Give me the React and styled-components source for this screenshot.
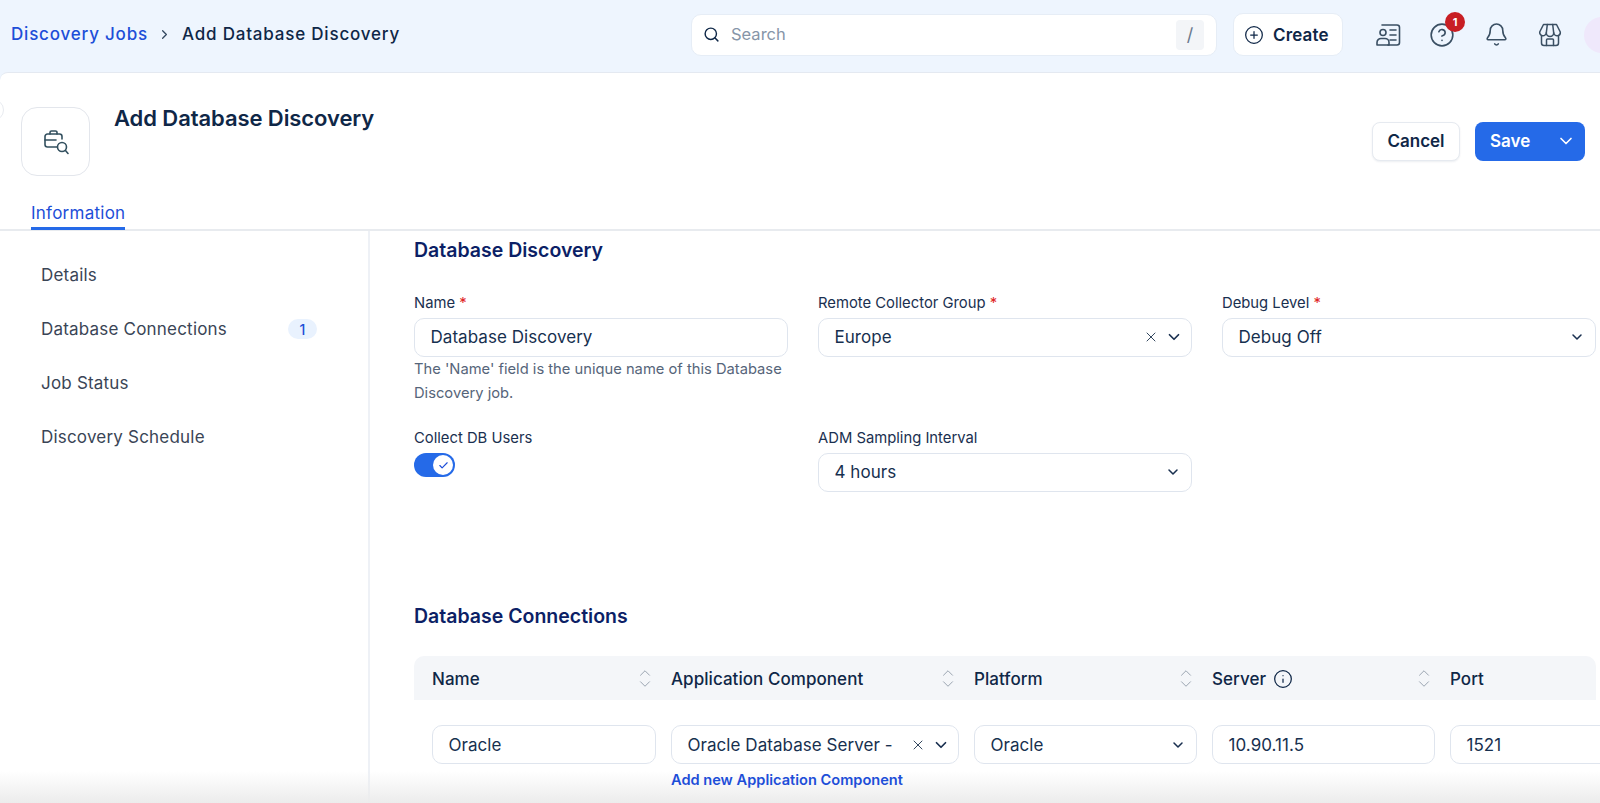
import React from "react";
import styled, { createGlobalStyle } from "styled-components";
import { Search, CirclePlus, CircleHelp, Bell, ChevronRight, ChevronDown, ChevronUp, X, Info, Check } from "lucide-react";

const Global = createGlobalStyle`
  html, body { margin: 0; padding: 0; background: #eef5fe; }
  body { font-family: Inter, "Liberation Sans", sans-serif; color: #0f2747; }
  * { box-sizing: border-box; }
`;

const Page = styled.div`
  position: relative;
  width: 1600px;
  height: 803px;
  overflow: hidden;
  background: #eef5fe;
`;

const TopBar = styled.header`
  display: flex;
  align-items: center;
  height: 72px;
  padding-left: 11px;
`;

const Crumbs = styled.nav`
  flex: none;
  display: flex;
  align-items: center;
  width: 680px;
  margin-top: -4px;
  font-size: 17px;
  font-weight: 500;
  letter-spacing: 0.8px;
`;
const CrumbLink = styled.span`color: #1d4ed8;`;
const CrumbSep = styled.span`
  display: flex;
  margin: 0 10px 0 9px;
  color: #33475f;
`;
const CrumbCurrent = styled.span`color: #0f2747;`;

const SearchBox = styled.div`
  flex: none;
  display: flex;
  align-items: center;
  gap: 11px;
  width: 526px;
  height: 42px;
  margin-top: -3px;
  padding: 0 12px 0 11px;
  background: #fff;
  border: 1px solid #e6edf6;
  border-radius: 10px;
  color: #0f2747;
`;
const SearchHint = styled.span`
  flex: 1;
  font-size: 16.5px;
  padding-bottom: 1px;
  color: #8695a8;
`;
const SlashKey = styled.span`
  display: flex;
  align-items: center;
  justify-content: center;
  width: 28px;
  height: 30px;
  background: #f3f5f8;
  border-radius: 4px;
  font-size: 18px;
  color: #6b7a8d;
`;

const CreateButton = styled.button`
  flex: none;
  display: flex;
  align-items: center;
  gap: 9px;
  width: 110px;
  height: 43px;
  margin: -3px 0 0 16px;
  padding: 0 0 0 10px;
  background: #fff;
  border: 1px solid #e6edf6;
  border-radius: 10px;
  font: 600 17px Inter, sans-serif;
  letter-spacing: 0.15px;
  color: #0f2747;
`;

const IconRow = styled.div`
  display: flex;
  align-items: center;
  flex: none;
  margin-left: 31px;
  gap: 26px;
  margin-top: -3px;
  color: #3a4f63;
`;
const IconSlot = styled.span`
  position: relative;
  display: flex;
  width: 28px;
  height: 28px;
  align-items: center;
  justify-content: center;
`;
const Dot = styled.span`
  position: absolute;
  top: -9px;
  right: -9px;
  display: flex;
  align-items: center;
  justify-content: center;
  width: 20px;
  height: 20px;
  border-radius: 50%;
  background: #c81e24;
  color: #fff;
  font-size: 11px;
  font-weight: 700;
`;
const Avatar = styled.span`
  flex: none;
  width: 36px;
  height: 36px;
  border-radius: 50%;
  background: #efe8fb;
  margin-left: 20px;
  margin-top: -2px;
`;

const Panel = styled.section`
  height: 731px;
  background: #fff;
  border-top: 1px solid #e4e9f1;
  border-top-left-radius: 8px;
`;

const PageHead = styled.div`
  display: flex;
  align-items: flex-start;
  height: 158px;
  padding: 34px 15px 0 21px;
  border-bottom: 2px solid #e8ebef;
  position: relative;
`;
const Collapse = styled.span`
  position: absolute;
  left: -18px;
  top: 26px;
  width: 22px;
  height: 22px;
  border-radius: 50%;
  background: #fff;
  border: 1px solid #e8ebf0;
`;
const IconTile = styled.div`
  display: flex;
  align-items: center;
  justify-content: center;
  width: 69px;
  height: 69px;
  border: 1px solid #e3e6ec;
  border-radius: 16px;
  color: #33505f;
`;
const Title = styled.h1`
  flex: 1;
  margin: -3px 0 0 24px;
  font-size: 22px;
  line-height: 28px;
  font-weight: 600;
  letter-spacing: -0.08px;
  color: #0f2747;
`;
const Actions = styled.div`
  display: flex;
  gap: 15px;
  margin-top: 15px;
`;
const CancelButton = styled.button`
  width: 88px;
  height: 39px;
  padding: 0 0 2px;
  background: #fff;
  border: 1px solid #e6eaf0;
  border-radius: 8px;
  box-shadow: 0 1px 2px rgba(16, 40, 80, 0.08);
  font: 600 17px Inter, sans-serif;
  color: #0f2747;
`;
const SaveButton = styled.button`
  display: flex;
  align-items: center;
  justify-content: space-between;
  width: 110px;
  height: 39px;
  padding: 0 9px 2px 15px;
  background: #256ae8;
  border: 0;
  border-radius: 8px;
  font: 600 17px Inter, sans-serif;
  color: #fff;
`;
const TabStrip = styled.div`
  position: absolute;
  left: 31px;
  bottom: -1px;
  height: 36px;
  font-size: 17px;
  font-weight: 400;
  letter-spacing: 0.25px;
  line-height: 26px;
  color: #1d4ed8;
  border-bottom: 3px solid #256ae8;
  padding-top: 6px;
`;

const Body = styled.div`
  display: flex;
  height: 571px;
`;
const Side = styled.aside`
  flex: none;
  width: 370px;
  padding: 17px 51px 0 41px;
  border-right: 2px solid #eef1f6;
  display: flex;
  flex-direction: column;
`;
const SideItem = styled.div`
  display: flex;
  align-items: center;
  justify-content: space-between;
  height: 54px;
  font-size: 17px;
  letter-spacing: 0.2px;
  color: #3a4556;
`;
const Count = styled.span`
  display: flex;
  align-items: center;
  justify-content: center;
  width: 29px;
  height: 20px;
  border-radius: 10px;
  background: #e9f2fe;
  color: #1d4ed8;
  font-size: 14px;
  font-weight: 500;
`;

const Main = styled.main`
  flex: 1;
  min-width: 0;
  overflow: hidden;
  padding: 7px 4px 0 44px;
`;
const SectionTitle = styled.h2`
  margin: 0;
  font-size: 19.5px;
  line-height: 24px;
  font-weight: 600;
  color: #0c1f66;
`;
const FormGrid = styled.div`
  display: grid;
  grid-template-columns: repeat(3, 374px);
  column-gap: 30px;
  margin-top: 31px;
`;
const Field = styled.div`
  height: ${p => p.$h}px;
`;
const Label = styled.label`
  display: block;
  font-size: 14.8px;
  line-height: 20px;
  margin-bottom: 5px;
  color: #1a3050;
`;
const Req = styled.span`color: #e02424;`;
const Control = styled.div`
  display: flex;
  align-items: center;
  height: 39px;
  padding: 0 ${p => p.$pr ?? 15}px 1px 15.5px;
  border: 1px solid #dfe5ee;
  border-radius: 10px;
  background: #fff;
  font-size: 17px;
  letter-spacing: 0.05px;
  color: #17304f;
  min-width: 0;
`;
const ControlText = styled.span`
  flex: 1;
  min-width: 0;
  white-space: nowrap;
  overflow: hidden;
`;
const ClearIcon = styled(X)`
  flex: none;
  margin-right: 6px;
  color: #33475f;
`;
const Caret = styled(ChevronDown)`
  flex: none;
  color: #1a3050;
`;
const Hint = styled.p`
  margin: 0;
  font-size: 14.72px;
  line-height: 24px;
  color: #56657a;
`;
const Toggle = styled.span`
  display: flex;
  align-items: center;
  justify-content: flex-end;
  width: 41px;
  height: 24px;
  padding-right: 2px;
  border-radius: 12px;
  background: #256ae8;
`;
const Knob = styled.span`
  display: flex;
  align-items: center;
  justify-content: center;
  width: 20px;
  height: 20px;
  border-radius: 50%;
  background: #fff;
  color: #1d4ed8;
`;

const ConnectionsTitle = styled(SectionTitle)`
  margin-top: 97px;
`;
const Table = styled.div`
  width: 1260px;
  margin-top: 28px;
`;
const columns = "224px 288px 223px 223px 223px";
const HeadRow = styled.div`
  display: grid;
  grid-template-columns: ${columns};
  column-gap: 15px;
  align-items: center;
  width: 1182px;
  height: 44px;
  padding-left: 18px;
  background: #f4f6f9;
  border-radius: 10px 10px 0 0;
  overflow: hidden;
`;
const HeadCell = styled.div`
  display: flex;
  align-items: center;
  justify-content: space-between;
  padding-right: 2px;
  font-size: 17px;
  font-weight: 500;
  letter-spacing: 0.05px;
  color: #0f2747;
`;
const HeadLabel = styled.span`
  display: flex;
  align-items: center;
  gap: 7px;
  padding-top: 1px;
`;
const SortStack = styled.span`
  display: flex;
  flex-direction: column;
  color: #98a2af;
`;
const SortDown = styled(ChevronDown)`
  margin-top: -7px;
`;
const BodyRow = styled.div`
  display: grid;
  grid-template-columns: ${columns};
  column-gap: 15px;
  width: 1200px;
  padding: 25px 0 0 18px;
  ${Control} { padding-bottom: 0; }
`;
const AddLink = styled.a`
  position: relative;
  z-index: 1;
  display: block;
  margin-top: 8px;
  font-size: 14.6px;
  line-height: 17px;
  font-weight: 600;
  color: #1d4ed8;
`;
const Fade = styled.div`
  position: absolute;
  left: 0;
  right: 0;
  bottom: 0;
  height: 32px;
  background: linear-gradient(to bottom, rgba(236, 236, 236, 0), #ececec);
  pointer-events: none;
`;

const ContactIcon = () => (
  <svg width="26" height="24" viewBox="0 0 26 24" fill="none" stroke="currentColor" strokeWidth="1.6" strokeLinecap="round" strokeLinejoin="round">
    <path d="M7 2h15a2.500 2.500 0 0 1 2.500 2.500v15a2.500 2.500 0 0 1-2.500 2.500H13" />
    <path d="M15 7h6M15 12h6M15 17h6" />
    <circle cx="8" cy="9.500" r="3" />
    <path d="M2 22v-2.500a4 4 0 0 1 4-4h4a4 4 0 0 1 4 4V22z" />
  </svg>
);

const ShopIcon = () => (
  <svg width="24" height="24" viewBox="0 0 24 24" fill="none" stroke="currentColor" strokeWidth="1.5" strokeLinecap="round" strokeLinejoin="round">
    <path d="M5.500 1.500h13l3.800 7.500a3.200 3.200 0 0 1-6.600.8 3.700 3.700 0 0 1-7.400 0 3.200 3.200 0 0 1-6.600-.8z" />
    <path d="M9.300 1.500 8.300 9.800M14.700 1.500l1 8.300" />
    <path d="M3.500 12.500V20a2.500 2.500 0 0 0 2.500 2.500h12a2.500 2.500 0 0 0 2.500-2.500v-7.500" />
    <path d="M8.500 22.500V17a1 1 0 0 1 1-1h5a1 1 0 0 1 1 1v5.500" />
  </svg>
);

const CaseSearchIcon = () => (
  <svg width="26" height="26" viewBox="0 0 26 26" fill="none" stroke="currentColor" strokeWidth="1.6" strokeLinecap="round" strokeLinejoin="round">
    <path d="M14 18H4.500A2.500 2.500 0 0 1 2 15.500v-8A2.500 2.500 0 0 1 4.500 5h12A2.500 2.500 0 0 1 19 7.500V10" />
    <path d="M7 5V3.500A1.500 1.500 0 0 1 8.500 2h4A1.500 1.500 0 0 1 14 3.500V5" />
    <path d="M2 11h11" />
    <circle cx="19" cy="18" r="4.500" />
    <path d="M22.500 21.500 25 24.500" />
  </svg>
);

const Sort = () => (
  <SortStack>
    <ChevronUp size={18} strokeWidth={1.3} />
    <SortDown size={18} strokeWidth={1.3} />
  </SortStack>
);

const SelectControl = ({ children, clear }) => (
  <Control $pr={clear ? 8 : 10}>
    <ControlText>{children}</ControlText>
    {clear && <ClearIcon size={16} strokeWidth={1.5} />}
    <Caret size={clear ? 18 : 16} strokeWidth={2.3} />
  </Control>
);

export default function App() {
  return (
    <Page>
      <Global />
      <TopBar>
        <Crumbs>
          <CrumbLink>Discovery Jobs</CrumbLink>
          <CrumbSep><ChevronRight size={15} /></CrumbSep>
          <CrumbCurrent>Add Database Discovery</CrumbCurrent>
        </Crumbs>
        <SearchBox>
          <Search size={17} strokeWidth={2} />
          <SearchHint>Search</SearchHint>
          <SlashKey>/</SlashKey>
        </SearchBox>
        <CreateButton><CirclePlus size={20} strokeWidth={1.5} />Create</CreateButton>
        <IconRow>
          <IconSlot><ContactIcon /></IconSlot>
          <IconSlot><CircleHelp size={26} strokeWidth={1.5} /><Dot>1</Dot></IconSlot>
          <IconSlot><Bell size={25} strokeWidth={1.5} /></IconSlot>
          <IconSlot><ShopIcon /></IconSlot>
        </IconRow>
        <Avatar />
      </TopBar>
      <Panel>
        <PageHead>
          <Collapse />
          <IconTile><CaseSearchIcon /></IconTile>
          <Title>Add Database Discovery</Title>
          <Actions>
            <CancelButton>Cancel</CancelButton>
            <SaveButton>Save<ChevronDown size={20} strokeWidth={2} /></SaveButton>
          </Actions>
          <TabStrip>Information</TabStrip>
        </PageHead>
        <Body>
          <Side>
            <SideItem>Details</SideItem>
            <SideItem>Database Connections<Count>1</Count></SideItem>
            <SideItem>Job Status</SideItem>
            <SideItem>Discovery Schedule</SideItem>
          </Side>
          <Main>
            <SectionTitle>Database Discovery</SectionTitle>
            <FormGrid>
              <Field $h={135}>
                <Label>Name <Req>*</Req></Label>
                <Control>Database Discovery</Control>
                <Hint>The 'Name' field is the unique name of this Database Discovery job.</Hint>
              </Field>
              <Field $h={135}>
                <Label>Remote Collector Group <Req>*</Req></Label>
                <SelectControl clear>Europe</SelectControl>
              </Field>
              <Field $h={135}>
                <Label>Debug Level <Req>*</Req></Label>
                <SelectControl>Debug Off</SelectControl>
              </Field>
              <Field $h={79}>
                <Label>Collect DB Users</Label>
                <Toggle><Knob><Check size={11} strokeWidth={2.5} /></Knob></Toggle>
              </Field>
              <Field $h={79}>
                <Label>ADM Sampling Interval</Label>
                <SelectControl>4 hours</SelectControl>
              </Field>
            </FormGrid>
            <ConnectionsTitle>Database Connections</ConnectionsTitle>
            <Table>
              <HeadRow>
                <HeadCell><HeadLabel>Name</HeadLabel><Sort /></HeadCell>
                <HeadCell><HeadLabel>Application Component</HeadLabel><Sort /></HeadCell>
                <HeadCell><HeadLabel>Platform</HeadLabel><Sort /></HeadCell>
                <HeadCell><HeadLabel>Server<Info size={20} strokeWidth={1.5} /></HeadLabel><Sort /></HeadCell>
                <HeadCell><HeadLabel>Port</HeadLabel></HeadCell>
              </HeadRow>
              <BodyRow>
                <Control>Oracle</Control>
                <div>
                  <SelectControl clear>Oracle Database Server -</SelectControl>
                  <AddLink>Add new Application Component</AddLink>
                </div>
                <SelectControl>Oracle</SelectControl>
                <Control>10.90.11.5</Control>
                <Control $pr={0}>1521</Control>
              </BodyRow>
            </Table>
          </Main>
        </Body>
      </Panel>
      <Fade />
    </Page>
  );
}
